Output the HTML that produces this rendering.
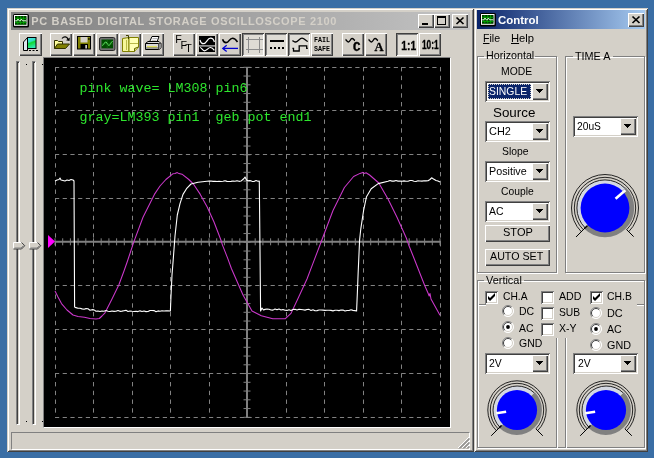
<!DOCTYPE html>
<html lang="en"><head><meta charset="utf-8"><title>PC BASED DIGITAL STORAGE OSCILLOSCOPE 2100</title>
<style>
html,body{margin:0;padding:0}
body{width:654px;height:458px;background:#3a6ea5;position:relative;overflow:hidden;font-family:"Liberation Sans",sans-serif;font-size:11px;color:#000}
.win{will-change:transform;position:absolute;background:#d4d0c8;box-shadow:inset 1px 1px 0 #d4d0c8,inset -1px -1px 0 #404040,inset 2px 2px 0 #fff,inset -2px -2px 0 #808080}
.a{position:absolute}
.t{position:absolute;white-space:nowrap;line-height:13px;font-size:11px}
.tb{position:absolute;width:22px;height:23px;background:#d4d0c8;box-sizing:border-box;box-shadow:inset 1px 1px 0 #fff,inset -1px -1px 0 #404040,inset -2px -2px 0 #808080}
.tb.dn{background:#dfdcd5;box-shadow:inset 1px 1px 0 #404040,inset -1px -1px 0 #fff,inset 2px 2px 0 #808080}
.tb svg{position:absolute;left:0;top:0}
.cap{position:absolute;width:16px;height:14px;background:#d4d0c8;box-shadow:inset 1px 1px 0 #fff,inset -1px -1px 0 #404040,inset -2px -2px 0 #808080}
.cap svg{position:absolute;left:0;top:0}
.sunk{position:absolute;box-sizing:border-box;border:1px solid;border-color:#808080 #fff #fff #808080}
.combo{position:absolute;height:21px;background:#fff;box-sizing:border-box;box-shadow:inset 1px 1px 0 #808080,inset -1px -1px 0 #fff,inset 2px 2px 0 #404040,inset -2px -2px 0 #d4d0c8}
.combo .dd{position:absolute;right:2px;top:2px;width:16px;height:17px;background:#d4d0c8;box-shadow:inset 1px 1px 0 #fff,inset -1px -1px 0 #404040,inset -2px -2px 0 #808080}
.combo .dd:after{content:"";position:absolute;left:4px;top:6px;width:7px;height:4px;background:linear-gradient(#000,#000) 0 0/7px 1px no-repeat,linear-gradient(#000,#000) 1px 1px/5px 1px no-repeat,linear-gradient(#000,#000) 2px 2px/3px 1px no-repeat,linear-gradient(#000,#000) 3px 3px/1px 1px no-repeat}
.btn{position:absolute;background:#d4d0c8;box-sizing:border-box;box-shadow:inset 1px 1px 0 #fff,inset -1px -1px 0 #404040,inset -2px -2px 0 #808080;text-align:center}
.grp{position:absolute;box-sizing:border-box;border:1px solid #808080;box-shadow:inset 1px 1px 0 #fff,1px 1px 0 #fff}
.cb{position:absolute;width:13px;height:13px;background:#fff;box-sizing:border-box;box-shadow:inset 1px 1px 0 #808080,inset -1px -1px 0 #fff,inset 2px 2px 0 #404040,inset -2px -2px 0 #d4d0c8}
.cb svg{position:absolute;left:0;top:0}
.rd{position:absolute;width:12px;height:12px}
</style></head>
<body>
<div class="win" id="mainwin" style="left:7px;top:8px;width:467px;height:444px">
<div class="a" id="mtitle" style="left:4px;top:4px;width:459px;height:18px;background:linear-gradient(to right,#808080,#c4c4c4)"></div>
<div class="a" style="left:6px;top:6px;width:16px;height:14px"><svg width="16" height="14" viewBox="0 0 16 14"><rect x="0" y="0" width="16" height="13.600" rx="1.600" fill="#000"/><rect x="1" y="1" width="13.500" height="10.800" fill="#fff"/><rect x="2" y="2" width="11.500" height="8.800" fill="#003a00"/><path d="M2 4.300H13.500M2 8.600H13.500M4.800 2V10.800M7.700 2V10.800M10.600 2V10.800" stroke="#00a800" stroke-width=".900" fill="none"/><path d="M2.200 6.800h1.800l1-1.800 1.200 1.800h1.200l1-1.800 1.200 1.800h3.600" stroke="#d8ffd8" stroke-width="1" fill="none"/></svg></div>
<span class="t" id="t_main" style="left:24.3px;top:7px;font-weight:bold;color:#d4d0c8;letter-spacing:0.66px">PC BASED DIGITAL STORAGE OSCILLOSCOPE 2100</span>
<div class="cap" style="left:411px;top:6px"><svg width="16" height="14" shape-rendering="crispEdges"><rect x="4" y="9" width="6" height="2" fill="#000"/></svg></div><div class="cap" style="left:427px;top:6px"><svg width="16" height="14" shape-rendering="crispEdges"><rect x="3.5" y="2.5" width="8" height="8" fill="none" stroke="#000"/><rect x="3" y="2" width="9" height="2" fill="#000"/></svg></div><div class="cap" style="left:445px;top:6px"><svg width="16" height="14"><path d="M4.5 3.5l7 6.5M11.5 3.5l-7 6.5" stroke="#000" stroke-width="1.7" fill="none"/></svg></div>
<div class="tb" style="left:12px;top:25px;width:23px"><svg width="22" height="22" viewBox="0 0 22 22"><defs><linearGradient id="gcard" x1="0" y1="0" x2="0.3" y2="1"><stop offset="0" stop-color="#50e8f0"/><stop offset="0.42" stop-color="#30e0c0"/><stop offset="0.56" stop-color="#10d830"/><stop offset="1" stop-color="#30e8b0"/></linearGradient></defs><path d="M8.500 4.500L4.500 9V17.500H8.500Z" fill="#dce8ee" stroke="#000"/><rect x="8.500" y="4.500" width="8.500" height="11" fill="url(#gcard)" stroke="#000"/><path d="M5 17.500H8.500M10 17.500H12M13.500 17.500H15.500M17 17.500H19" stroke="#000" stroke-width="1.200"/></svg></div>
<div class="tb" style="left:43px;top:25px"><svg width="22" height="22" viewBox="0 0 22 22"><path d="M4.500 15.500V7.500H7.500L8.500 8.500H12.500V11" fill="#ffff9c" stroke="#303000"/><path d="M4.500 15.500L7.500 11H19.500L15.500 15.500Z" fill="#808000" stroke="#303000"/><path d="M12 5.500c2-2.500 5-2 6 .8" fill="none" stroke="#000" stroke-width="1.200"/><path d="M16 7.200l3.500.8l.3-3.600Z" fill="#000"/></svg></div>
<div class="tb" style="left:66px;top:25px"><svg width="22" height="22" viewBox="0 0 22 22"><rect x="4.500" y="3.500" width="13" height="12.500" fill="#808000" stroke="#000"/><rect x="7.500" y="4" width="7" height="5.500" fill="#d4d0c8"/><rect x="7.500" y="11" width="7.500" height="5" fill="#000"/><rect x="12.300" y="12" width="1.700" height="3.500" fill="#d0d0d0"/><rect x="15.300" y="5" width="1.200" height="2" fill="#000"/></svg></div>
<div class="tb" style="left:89px;top:25px"><svg width="22" height="22" viewBox="0 0 22 22"><rect x="3.500" y="4.500" width="15.500" height="13" rx="1.600" fill="#707070" stroke="#282828"/><rect x="5.500" y="6.500" width="11.500" height="8.800" fill="#004c00"/><path d="M5.500 10.800H17M11.200 6.500V15.300" stroke="#1a701a" stroke-width=".700"/><path d="M6 12.500l1.500-.8 1.300-2.400 1.400-.3 1.400 2.300 1.500 1.400 1.400-2 1.200-1.900 1-.3" fill="none" stroke="#58d858" stroke-width="1"/></svg></div>
<div class="tb" style="left:112px;top:25px"><svg width="22" height="22" viewBox="0 0 22 22"><path d="M3.500 5.500L10 4.500V18.500H3.500Z" fill="#f6f69a" stroke="#808000"/><path d="M10 4.500H19.500V14L15.500 18.500H10Z" fill="#ffffb4" stroke="#808000"/><path d="M10.500 10.500H19M7.500 7V17" stroke="#b8b848" fill="none"/><path d="M7 2.500H9.500V6" fill="none" stroke="#404000"/><path d="M15.500 18.500L15.500 15.500L19.500 14" fill="#d8d868" stroke="#606000"/></svg></div>
<div class="tb" style="left:135px;top:25px"><svg width="22" height="22" viewBox="0 0 22 22"><path d="M7.500 9L10 3.500H17L15 9Z" fill="#fff" stroke="#000"/><path d="M10.500 5.500h5M9.800 7.300h4.700" stroke="#a0a0a0" stroke-width=".800"/><path d="M3.500 10.500L6 8.500H17L19 10.500V14.500L17.500 16.500H3.500Z" fill="#d8d8d8" stroke="#000"/><path d="M3.500 10.500H16.500L19 10.500M16.500 10.500V16.500" stroke="#000" fill="none"/><path d="M16.500 10.500H19V14.500L17.500 16.500H16.500Z" fill="#909090"/><rect x="5" y="13" width="10" height="1.600" fill="#e0e060"/><path d="M3.500 15H16.500" stroke="#404040" stroke-width=".800"/></svg></div>
<div class="tb" style="left:166px;top:25px"><svg width="22" height="22" viewBox="0 0 22 22"><g font-family="Liberation Sans,sans-serif" font-size="10.700" fill="#000"><text x="2.200" y="10.300">F</text><text x="7.500" y="15.600">F</text><text x="12.300" y="18.700">T</text></g></svg></div>
<div class="tb" style="left:189px;top:25px"><svg width="22" height="22" viewBox="0 0 22 22"><rect x="3" y="3" width="16" height="16" fill="#000"/><path d="M3 12.900h16" stroke="#a0a0a0" stroke-width="1.600"/><path d="M4 7c.5 2 1.500 3.700 3.400 3.700 3.600 0 3.600-5.500 7.100-5.500 1.900 0 3.300 1.500 3.900 3.800" fill="none" stroke="#fff" stroke-width="1.200"/><path d="M4 14.500c1.500 0 2.500 3.300 4.500 3.300 2.700 0 3.300-3.300 6-3.300 1.800 0 2.800 1.300 3.900 2.800" fill="none" stroke="#fff" stroke-width="1.200"/></svg></div>
<div class="tb" style="left:212px;top:25px"><svg width="22" height="22" viewBox="0 0 22 22"><path d="M3.600 6.300c.6 2 1.800 3.300 3.400 3.300 3.300 0 3.200-4.400 6.500-4.400 2 0 3.500 1.500 5 3.800" fill="none" stroke="#000" stroke-width="1.600"/><path d="M3.800 15.400H19" stroke="#0000d0" stroke-width="1.300"/><path d="M7.700 12.200L3.800 15.400L7.700 18.600" fill="none" stroke="#0000d0" stroke-width="1.300"/></svg></div>
<div class="tb dn" style="left:235px;top:25px"><svg width="22" height="22" viewBox="0 0 22 22" shape-rendering="crispEdges"><path d="M6.500 3.500v16M17.500 3.500v16M4 6.500h17M4 16.500h17" stroke="#8c8c8c" stroke-width="1"/></svg></div>
<div class="tb dn" style="left:258px;top:25px"><svg width="22" height="22" viewBox="0 0 22 22" shape-rendering="crispEdges"><rect x="5" y="7" width="14" height="2" fill="#000"/><g fill="#000"><rect x="5" y="14" width="2" height="2"/><rect x="9" y="14" width="2" height="2"/><rect x="13" y="14" width="2" height="2"/><rect x="17" y="14" width="2" height="2"/></g></svg></div>
<div class="tb dn" style="left:281px;top:25px"><svg width="22" height="22" viewBox="0 0 22 22"><path d="M4.400 7.600c1 .3 1.800 1.500 3.200 1.400 2.200-.2 4-3.800 6.400-3.800 2.300 0 3.600 2.300 5.800 3.300" fill="none" stroke="#000" stroke-width="1.300"/><path d="M4.400 15.400H5.500V18H11.200V12.900H18.700V15.400H19.800" fill="none" stroke="#000" stroke-width="1.300"/></svg></div>
<div class="tb" style="left:304px;top:25px"><svg width="22" height="22" viewBox="0 0 22 22"><g font-family="Liberation Mono,monospace" font-weight="bold" font-size="7" fill="#000"><text x="3" y="8.900" textLength="16" lengthAdjust="spacingAndGlyphs">FAIL</text><text x="3" y="17.900" textLength="16" lengthAdjust="spacingAndGlyphs">SAFE</text></g></svg></div>
<div class="tb" style="left:335px;top:25px"><svg width="22" height="22" viewBox="0 0 22 22"><path d="M3.500 6.500c1 .3 1.500 2.500 3 2.500s2-3.500 3.500-3.500 2 1.500 3 2" fill="none" stroke="#000" stroke-width="1.400"/><text x="11" y="18.100" font-family="Liberation Mono,monospace" font-weight="bold" font-size="12.500" fill="#000" stroke="#000" stroke-width=".400">C</text></svg></div>
<div class="tb" style="left:358px;top:25px"><svg width="22" height="22" viewBox="0 0 22 22"><path d="M3.500 6.500c1 .3 1.500 2.500 3 2.500s2-3.500 3.500-3.500 2 1.500 3 2" fill="none" stroke="#000" stroke-width="1.400"/><text x="9.600" y="18.100" font-family="Liberation Serif,serif" font-weight="bold" font-size="12.500" fill="#000" stroke="#000" stroke-width=".300">A</text></svg></div>
<div class="tb dn" style="left:389px;top:25px"><svg width="22" height="22" viewBox="0 0 22 22"><text x="5.300" y="16.500" font-family="Liberation Sans,sans-serif" font-weight="bold" font-size="12" fill="#000" stroke="#000" stroke-width=".300" textLength="14.800" lengthAdjust="spacingAndGlyphs">1:1</text></svg></div>
<div class="tb" style="left:412px;top:25px"><svg width="22" height="22" viewBox="0 0 22 22"><text x="3" y="15.800" font-family="Liberation Sans,sans-serif" font-weight="bold" font-size="12" fill="#000" stroke="#000" stroke-width=".350" textLength="16.600" lengthAdjust="spacingAndGlyphs">10:1</text></svg></div>
<div class="a" style="left:9px;top:53px;width:4px;height:364px;box-sizing:border-box;border:1px solid;border-color:#808080 #fff #fff #808080;background:#d4d0c8;box-shadow:inset 1px 1px 0 #404040"></div><div class="a" style="left:25px;top:53px;width:4px;height:364px;box-sizing:border-box;border:1px solid;border-color:#808080 #fff #fff #808080;background:#d4d0c8;box-shadow:inset 1px 1px 0 #404040"></div><div class="a" style="left:6px;top:232px;width:13px;height:8px"><svg width="13" height="8" viewBox="0 0 13 8"><path d="M0.500 0.500H8.500L11.800 3.700L8.500 7H0.500Z" fill="#d4d0c8"/><path d="M0.500 6.500V0.500H8.500" stroke="#fff" fill="none"/><path d="M0.500 7H8.500L11.800 3.700L8.500 0.500" stroke="#404040" fill="none"/><path d="M1.500 6H8L10.500 3.700" stroke="#808080" fill="none"/></svg></div><div class="a" style="left:22px;top:232px;width:13px;height:8px"><svg width="13" height="8" viewBox="0 0 13 8"><path d="M0.500 0.500H8.500L11.800 3.700L8.500 7H0.500Z" fill="#d4d0c8"/><path d="M0.500 6.500V0.500H8.500" stroke="#fff" fill="none"/><path d="M0.500 7H8.500L11.800 3.700L8.500 0.500" stroke="#404040" fill="none"/><path d="M1.500 6H8L10.500 3.700" stroke="#808080" fill="none"/></svg></div><div class="a" style="left:19px;top:56px;width:1px;height:1px;background:#000"></div><div class="a" style="left:35px;top:56px;width:1px;height:1px;background:#000"></div><div class="a" style="left:19px;top:413px;width:1px;height:1px;background:#000"></div><div class="a" style="left:35px;top:413px;width:1px;height:1px;background:#000"></div>
<div class="sunk" id="scope" style="left:36px;top:49px;width:408px;height:371px;background:#000">
<svg class="a" style="left:0;top:0" width="406" height="369" viewBox="0 0 406 369">
<path d="M11.5 9V360" stroke="#828282" stroke-width="1" stroke-dasharray="4.4 4.35" fill="none"/>
<path d="M49.5 9V360" stroke="#828282" stroke-width="1" stroke-dasharray="4.4 4.35" fill="none"/>
<path d="M88.5 9V360" stroke="#828282" stroke-width="1" stroke-dasharray="4.4 4.35" fill="none"/>
<path d="M126.5 9V360" stroke="#828282" stroke-width="1" stroke-dasharray="4.4 4.35" fill="none"/>
<path d="M165.5 9V360" stroke="#828282" stroke-width="1" stroke-dasharray="4.4 4.35" fill="none"/>
<path d="M242.5 9V360" stroke="#828282" stroke-width="1" stroke-dasharray="4.4 4.35" fill="none"/>
<path d="M280.5 9V360" stroke="#828282" stroke-width="1" stroke-dasharray="4.4 4.35" fill="none"/>
<path d="M319.5 9V360" stroke="#828282" stroke-width="1" stroke-dasharray="4.4 4.35" fill="none"/>
<path d="M357.5 9V360" stroke="#828282" stroke-width="1" stroke-dasharray="4.4 4.35" fill="none"/>
<path d="M396.5 9V360" stroke="#828282" stroke-width="1" stroke-dasharray="4.4 4.35" fill="none"/>
<path d="M11 9.5H397" stroke="#828282" stroke-width="1" stroke-dasharray="4.2 3.5" fill="none"/>
<path d="M11 52.5H397" stroke="#828282" stroke-width="1" stroke-dasharray="4.2 3.5" fill="none"/>
<path d="M11 96.5H397" stroke="#828282" stroke-width="1" stroke-dasharray="4.2 3.5" fill="none"/>
<path d="M11 140.5H397" stroke="#828282" stroke-width="1" stroke-dasharray="4.2 3.5" fill="none"/>
<path d="M11 227.5H397" stroke="#828282" stroke-width="1" stroke-dasharray="4.2 3.5" fill="none"/>
<path d="M11 271.5H397" stroke="#828282" stroke-width="1" stroke-dasharray="4.2 3.5" fill="none"/>
<path d="M11 315.5H397" stroke="#828282" stroke-width="1" stroke-dasharray="4.2 3.5" fill="none"/>
<path d="M11 359.5H397" stroke="#828282" stroke-width="1" stroke-dasharray="4.2 3.5" fill="none"/>
<path d="M11 183.8H397" stroke="#808080" stroke-width="2" fill="none"/>
<path d="M203 9V360" stroke="#808080" stroke-width="2" fill="none"/>
<path d="M11 180.3V187.3M18.7 180.3V187.3M26.4 180.3V187.3M34.1 180.3V187.3M41.8 180.3V187.3M49.5 180.3V187.3M57.2 180.3V187.3M64.9 180.3V187.3M72.6 180.3V187.3M80.3 180.3V187.3M88 180.3V187.3M95.7 180.3V187.3M103.4 180.3V187.3M111.1 180.3V187.3M118.8 180.3V187.3M126.5 180.3V187.3M134.2 180.3V187.3M141.9 180.3V187.3M149.6 180.3V187.3M157.3 180.3V187.3M165 180.3V187.3M172.7 180.3V187.3M180.4 180.3V187.3M188.1 180.3V187.3M195.8 180.3V187.3M203.5 180.3V187.3M211.2 180.3V187.3M218.9 180.3V187.3M226.6 180.3V187.3M234.3 180.3V187.3M242 180.3V187.3M249.7 180.3V187.3M257.4 180.3V187.3M265.1 180.3V187.3M272.8 180.3V187.3M280.5 180.3V187.3M288.2 180.3V187.3M295.9 180.3V187.3M303.6 180.3V187.3M311.3 180.3V187.3M319 180.3V187.3M326.7 180.3V187.3M334.4 180.3V187.3M342.1 180.3V187.3M349.8 180.3V187.3M357.5 180.3V187.3M365.2 180.3V187.3M372.9 180.3V187.3M380.6 180.3V187.3M388.3 180.3V187.3M396 180.3V187.3M199.5 9.3H206.5M199.5 18.05H206.5M199.5 26.8H206.5M199.5 35.55H206.5M199.5 44.3H206.5M199.5 53.05H206.5M199.5 61.8H206.5M199.5 70.55H206.5M199.5 79.3H206.5M199.5 88.05H206.5M199.5 96.8H206.5M199.5 105.55H206.5M199.5 114.3H206.5M199.5 123.05H206.5M199.5 131.8H206.5M199.5 140.55H206.5M199.5 149.3H206.5M199.5 158.05H206.5M199.5 166.8H206.5M199.5 175.55H206.5M199.5 184.3H206.5M199.5 193.05H206.5M199.5 201.8H206.5M199.5 210.55H206.5M199.5 219.3H206.5M199.5 228.05H206.5M199.5 236.8H206.5M199.5 245.55H206.5M199.5 254.3H206.5M199.5 263.05H206.5M199.5 271.8H206.5M199.5 280.55H206.5M199.5 289.3H206.5M199.5 298.05H206.5M199.5 306.8H206.5M199.5 315.55H206.5M199.5 324.3H206.5M199.5 333.05H206.5M199.5 341.8H206.5M199.5 350.55H206.5M199.5 359.3H206.5" stroke="#808080" stroke-width="1" fill="none"/>
<path d="M4 177L11 183.5L4 190Z" fill="#ff00ff"/>
<path d="M11 233L14 239L17.5 245.6L23 252L29 257L34 258.5L40.4 259.3L46 260.5L52 261L55.3 260.5L58 258L61 254.8L68 241L74.8 227L80 213L83.5 203L90 183.4L99 159.3L110.4 136.4L116 128L121.9 121.5L128.8 115.8L131 115.5L133.3 114.6L135 115.6L138 116.2L144.8 121.5L149.4 126L156.3 136.4L163.2 149L170 164L177 182.3L178.3 186.6L183.8 200.6L187.5 210.7L199 237L208 253L217.3 257.7L228.8 260.7L241.4 260.7L247 255.4L254 240.5L263 221L270 202.6L277 184.3L289 152.5L300.4 129.5L309.6 118.5L316 115.4L318.8 114.4L320.5 115.4L322 114.8L325.6 117L334.8 125L344 141L353 159.3L362.3 180L364.4 186.2L369.2 198.3L380.8 227.7L384 235L385.2 238L386 235.5L387 241L396 257.2" stroke="#cc38cc" stroke-width="1.05" fill="none" stroke-linejoin="round"/>
<path d="M11 123L13 122L15 121.5L16 120L17 122L19 122.5L21 123L23 122L25 122.5L27 121.5L29 122L30 123L30.6 249L32 249.63L34 250.31L36 250.32L38 250.9L40 251.18L42 250.64L44 250.82L46 252.22L48 251.66L50 251.88L52 253.19L54 252.96L56 253.47L58 252.97L60 253.19L62 252.51L64 253.19L66 253.52L68 253.03L70 253.34L72 253.24L74 252.39L76 253.36L78 253.13L80 252.72L82 252.34L84 253.51L86 252.96L88 253.31L90 253.53L92 253.3L94 253.59L96 252.85L98 253.42L100 252.92L102 253.61L104 253.53L106 252.44L108 252.49L110 252.6L112 253.65L114 252.91L116 253.18L118 252.72L120 253.01L122 252.84L124 252.79L126.4 253L127 238L128 217L129.2 202L131 178L133.3 157L136 145.6L139 136.4L142.5 130.7L147 126L154 124.2L163 123.3L165 123.09L167 123.08L169 123.4L171 123.18L173 123.43L175 123.36L177 123.49L179 123.17L181 122.66L183 123.36L185 123.46L187 123.4L189 123.07L191 123.21L193 122.71L195 123.33L197 123.07L200 120.5L201 119L202.5 122L204 122.78L206 122.56L208 123.35L210 123.49L212 122.59L214 123.3L215.3 123L216 192L216.6 253L218 250L219.5 252L221 251.37L223 251.03L225 251.26L227 251.94L229 252.11L231 250.97L233 251.79L235 251.02L237 251.98L239 251.46L241 252.26L243 252.42L245 251.77L247 252.49L249 251.54L251 251.24L253 252L255 251.22L257 251.48L259 251.79L261 252.1L263 251.49L265 251.35L267 252.53L269 251.77L271 252.7L273 252.63L275 251.93L277 252.07L279 252.17L281 252.37L283 252.32L285 252.29L287 252.4L289 252.87L291 252.29L293 252.2L295 252.63L297 251.98L299 252.09L301 253.06L303 252.44L305 252.5L307 251.77L309 252.36L311 252.61L312.6 253L313.4 234L314.1 216L315.6 182L316.8 170.8L319.6 152.5L322.5 138.7L327.2 130.7L334.2 125.6L344 123.3L346 122.52L348 123.12L350 123.13L352 122.56L354 123.13L356 122.97L358 123.18L360 122.85L362 123.21L364 123.24L366 122.52L368 122.56L370 123.18L372 123.46L374 122.75L376 122.96L378 123.09L380 122.82L382 122.86L384 122.81L386 121.5L387.6 119.8L389.5 121L392 122.5L394 123L396 124" stroke="#ffffff" stroke-width="1.1" fill="none" stroke-linejoin="round"/>
</svg>
<span class="t" id="t_g1" style="left:35.5px;top:23px;font-family:'Liberation Mono',monospace;font-size:13.33px;line-height:15px;color:#2ee62e;white-space:pre">pink wave= LM308 pin6</span>
<span class="t" id="t_g2" style="left:35.5px;top:52px;font-family:'Liberation Mono',monospace;font-size:13.33px;line-height:15px;color:#2ee62e;white-space:pre">gray=LM393 pin1  geb pot end1</span>
</div>
<div class="sunk" style="left:4px;top:424px;width:459px;height:18px"></div><div class="a" style="left:450px;top:428px;width:13px;height:13px"><svg width="13" height="13" viewBox="0 0 13 13"><path d="M12 1L1 12M12 5L5 12M12 9L9 12" stroke="#fff" stroke-width="1"/><path d="M12.500 2L2 12.500M12.500 3L3 12.500M12.500 6L6 12.500M12.500 7L7 12.500M12.500 10L10 12.500M12.500 11L11 12.500" stroke="#808080" stroke-width="1"/></svg></div>
</div>
<div class="win" id="ctrlwin" style="left:474px;top:8px;width:174px;height:444px">
<div class="a" id="ctitle" style="left:3px;top:2px;width:168px;height:19px;background:linear-gradient(to right,#0a246a,#a6caf0)"></div>
<div class="a" style="left:6px;top:5px;width:16px;height:14px"><svg width="16" height="14" viewBox="0 0 16 14"><rect x="0" y="0" width="16" height="13.600" rx="1.600" fill="#000"/><rect x="1" y="1" width="13.500" height="10.800" fill="#fff"/><rect x="2" y="2" width="11.500" height="8.800" fill="#003a00"/><path d="M2 4.300H13.500M2 8.600H13.500M4.800 2V10.800M7.700 2V10.800M10.600 2V10.800" stroke="#00a800" stroke-width=".900" fill="none"/><path d="M2.200 6.800h1.800l1-1.800 1.200 1.800h1.200l1-1.800 1.200 1.800h3.600" stroke="#d8ffd8" stroke-width="1" fill="none"/></svg></div>
<span class="t" id="t_ctrl" style="left:23.54px;top:5.9px;font-size:11px;transform:scaleX(1.0397);transform-origin:0 0;font-weight:bold;color:#fff">Control</span>
<div class="cap" style="left:154px;top:5px"><svg width="16" height="14"><path d="M4.500 3.500l7 6.500M11.500 3.500l-7 6.500" stroke="#000" stroke-width="1.700" fill="none"/></svg></div>
<span class="t" id="t_file" style="left:8.55px;top:24.1px;font-size:11px;transform:scaleX(0.9640);transform-origin:0 0;"><u>F</u>ile</span><span class="t" id="t_help" style="left:36.5px;top:24.1px;font-size:11px;transform:scaleX(1.0195);transform-origin:0 0;"><u>H</u>elp</span>
<div class="grp" id="g_h" style="left:3px;top:48px;width:80px;height:217px"></div><span class="a" style="left:10px;top:45px;width:51px;height:4px;background:#d4d0c8"></span><span class="t" id="t_hor" style="left:11.84px;top:41.1px;font-size:11px;transform:scaleX(0.9737);transform-origin:0 0;">Horizontal</span><span class="t" id="t_mode" style="left:27.07px;top:57.3px;font-size:11px;transform:scaleX(0.9438);transform-origin:0 0;">MODE</span><div class="combo" style="left:11px;top:73px;width:65px"><span class="a" style="left:3px;top:3px;width:43px;height:15px;background:#0a246a;box-sizing:border-box;border:1px dotted #d4d0c8"></span><span class="t" id="t_single" style="left:4.33px;top:4px;font-size:11px;transform:scaleX(0.9446);transform-origin:0 0;color:#fff">SINGLE</span><span class="dd"></span></div>
<span class="t" id="t_source" style="left:19.4px;top:97.9px;font-size:13px;transform:scaleX(1.0290);transform-origin:0 0;">Source</span><div class="combo" style="left:11px;top:113px;width:65px"><span class="t" id="t_ch2" style="left:4.15px;top:4px;font-size:11px;transform:scaleX(0.9926);transform-origin:0 0;">CH2</span><span class="dd"></span></div>
<span class="t" id="t_slope" style="left:27.53px;top:137.1px;font-size:11px;transform:scaleX(0.9422);transform-origin:0 0;">Slope</span><div class="combo" style="left:11px;top:153px;width:65px"><span class="t" id="t_pos" style="left:3.84px;top:4px;font-size:11px;transform:scaleX(0.9763);transform-origin:0 0;">Positive</span><span class="dd"></span></div>
<span class="t" id="t_couple" style="left:27.48px;top:177.1px;font-size:11px;transform:scaleX(0.9386);transform-origin:0 0;">Couple</span><div class="combo" style="left:11px;top:193px;width:65px"><span class="t" id="t_ac" style="left:4.2px;top:4px;font-size:11px;transform:scaleX(0.9495);transform-origin:0 0;">AC</span><span class="dd"></span></div>
<div class="btn" style="left:11px;top:217px;width:65px;height:17px"><span class="t" id="t_stop" style="left:18.2px;top:1.4px;font-size:11px;transform:scaleX(1.0031);transform-origin:0 0;">STOP</span></div>
<div class="btn" style="left:11px;top:241px;width:65px;height:17px"><span class="t" id="t_auto" style="left:4.8px;top:1.4px;font-size:11px;transform:scaleX(0.9714);transform-origin:0 0;">AUTO SET</span></div>
<div class="grp" id="g_t" style="left:91px;top:48px;width:80px;height:217px"></div><span class="a" style="left:99px;top:45px;width:40px;height:4px;background:#d4d0c8"></span><span class="t" id="t_timea" style="left:100.88px;top:41.6px;font-size:11px;transform:scaleX(0.9831);transform-origin:0 0;">TIME A</span><div class="combo" style="left:99px;top:108px;width:65px"><span class="t" id="t_20us" style="left:4.49px;top:4px;font-size:11px;transform:scaleX(0.9314);transform-origin:0 0;">20uS</span><span class="dd"></span></div>
<svg class="a" style="left:88.4px;top:157px" width="86" height="86" viewBox="-43 -43 86 86"><path d="M-23.69 23.69A33.5 33.5 0 1 1 23.69 23.69" fill="none" stroke="#101010" stroke-width=".900"/><path d="M-21.71 21.71A30.7 30.7 0 1 1 21.71 21.71" fill="none" stroke="#101010" stroke-width=".900"/><path d="M18.6 -18.6A26.3 26.3 0 0 1 -18.6 18.6" fill="none" stroke="#808080" stroke-width="5.8"/><path d="M-18.21 18.21A25.75 25.75 0 0 1 18.21 -18.21" fill="none" stroke="#d4d8e2" stroke-width="4.7"/><path d="M-19.87 19.87A28.1 28.1 0 0 1 19.87 -19.87" fill="none" stroke="#101010" stroke-width=".900"/><path d="M-17.68 17.68L-28.99 28.99" stroke="#000" stroke-width="1"/><path d="M-17.68 17.68L-20.58 20.58" stroke="#000" stroke-width="1.500"/><path d="M21.64 21.64L28.64 28.64" stroke="#000" stroke-width="1"/><circle cx="0" cy="0" r="24.4" fill="#0000ff"/><path d="M10.57 -9.18L20.38 -17.71" stroke="#fff" stroke-width="2.600"/></svg>
<div class="grp" id="g_v" style="left:3px;top:272px;width:168px;height:168px"></div><span class="a" style="left:10px;top:269px;width:40px;height:4px;background:#d4d0c8"></span><span class="t" id="t_vert" style="left:12.4px;top:265.5px;font-size:11px;transform:scaleX(0.9925);transform-origin:0 0;">Vertical</span><div class="a" style="left:5px;top:296px;width:7px;height:1px;background:#808080;box-shadow:0 1px 0 #fff"></div><div class="a" style="left:163px;top:296px;width:7px;height:1px;background:#808080;box-shadow:0 1px 0 #fff"></div><div class="a" style="left:82px;top:330px;width:1px;height:110px;background:#808080;box-shadow:1px 0 0 #fff"></div><div class="a" style="left:91px;top:330px;width:1px;height:110px;background:#808080;box-shadow:1px 0 0 #fff"></div>
<div class="cb" style="left:11px;top:283px"><svg width="13" height="13" viewBox="0 0 13 13"><path d="M3 5v3l2 2 5-5v-3l-5 5z" fill="#000"/></svg></div><span class="t" id="t_cha" style="left:29.09px;top:282.1px;font-size:11px;transform:scaleX(0.9344);transform-origin:0 0;">CH.A</span><div class="rd" style="left:27.7px;top:297px"><svg width="12" height="12" viewBox="0 0 12 12"><circle cx="6" cy="6" r="5.500" fill="#fff"/><path d="M2.100 9.900A5.500 5.500 0 0 1 9.900 2.100" stroke="#808080" fill="none"/><path d="M2.800 9.200A4.500 4.500 0 0 1 9.200 2.800" stroke="#404040" fill="none"/><path d="M9.900 2.100A5.500 5.500 0 0 1 2.100 9.900" stroke="#fff" fill="none"/><path d="M9.200 2.800A4.500 4.500 0 0 1 2.800 9.200" stroke="#d4d0c8" fill="none"/></svg></div><span class="t" id="t_dca" style="left:45.06px;top:297.1px;font-size:11px;transform:scaleX(0.9537);transform-origin:0 0;">DC</span><div class="rd" style="left:27.7px;top:313px"><svg width="12" height="12" viewBox="0 0 12 12"><circle cx="6" cy="6" r="5.500" fill="#fff"/><path d="M2.100 9.900A5.500 5.500 0 0 1 9.900 2.100" stroke="#808080" fill="none"/><path d="M2.800 9.200A4.500 4.500 0 0 1 9.200 2.800" stroke="#404040" fill="none"/><path d="M9.900 2.100A5.500 5.500 0 0 1 2.100 9.900" stroke="#fff" fill="none"/><path d="M9.200 2.800A4.500 4.500 0 0 1 2.800 9.200" stroke="#d4d0c8" fill="none"/><circle cx="6" cy="6" r="1.900" fill="#000"/></svg></div><span class="t" id="t_aca" style="left:45.1px;top:313.5px;font-size:11px;transform:scaleX(0.9428);transform-origin:0 0;">AC</span><div class="rd" style="left:27.7px;top:329px"><svg width="12" height="12" viewBox="0 0 12 12"><circle cx="6" cy="6" r="5.500" fill="#fff"/><path d="M2.100 9.900A5.500 5.500 0 0 1 9.900 2.100" stroke="#808080" fill="none"/><path d="M2.800 9.200A4.500 4.500 0 0 1 9.200 2.800" stroke="#404040" fill="none"/><path d="M9.900 2.100A5.500 5.500 0 0 1 2.100 9.900" stroke="#fff" fill="none"/><path d="M9.200 2.800A4.500 4.500 0 0 1 2.800 9.200" stroke="#d4d0c8" fill="none"/></svg></div><span class="t" id="t_gnda" style="left:45.28px;top:329.3px;font-size:11px;transform:scaleX(0.9497);transform-origin:0 0;">GND</span><div class="cb" style="left:67px;top:283px"></div><span class="t" id="t_add" style="left:85.3px;top:282.3px;font-size:11px;transform:scaleX(0.9685);transform-origin:0 0;">ADD</span><div class="cb" style="left:67px;top:299px"></div><span class="t" id="t_sub" style="left:85.24px;top:298.1px;font-size:11px;transform:scaleX(0.9369);transform-origin:0 0;">SUB</span><div class="cb" style="left:67px;top:315px"></div><span class="t" id="t_xy" style="left:84.59px;top:314.3px;font-size:11px;transform:scaleX(0.9510);transform-origin:0 0;">X-Y</span><div class="cb" style="left:116px;top:283px"><svg width="13" height="13" viewBox="0 0 13 13"><path d="M3 5v3l2 2 5-5v-3l-5 5z" fill="#000"/></svg></div><span class="t" id="t_chb" style="left:132.88px;top:282.3px;font-size:11px;transform:scaleX(0.9469);transform-origin:0 0;">CH.B</span><div class="rd" style="left:116px;top:298.7px"><svg width="12" height="12" viewBox="0 0 12 12"><circle cx="6" cy="6" r="5.500" fill="#fff"/><path d="M2.100 9.900A5.500 5.500 0 0 1 9.900 2.100" stroke="#808080" fill="none"/><path d="M2.800 9.200A4.500 4.500 0 0 1 9.200 2.800" stroke="#404040" fill="none"/><path d="M9.900 2.100A5.500 5.500 0 0 1 2.100 9.900" stroke="#fff" fill="none"/><path d="M9.200 2.800A4.500 4.500 0 0 1 2.800 9.200" stroke="#d4d0c8" fill="none"/></svg></div><span class="t" id="t_dcb" style="left:132.73px;top:298.7px;font-size:11px;transform:scaleX(0.9880);transform-origin:0 0;">DC</span><div class="rd" style="left:116px;top:314.8px"><svg width="12" height="12" viewBox="0 0 12 12"><circle cx="6" cy="6" r="5.500" fill="#fff"/><path d="M2.100 9.900A5.500 5.500 0 0 1 9.900 2.100" stroke="#808080" fill="none"/><path d="M2.800 9.200A4.500 4.500 0 0 1 9.200 2.800" stroke="#404040" fill="none"/><path d="M9.900 2.100A5.500 5.500 0 0 1 2.100 9.900" stroke="#fff" fill="none"/><path d="M9.200 2.800A4.500 4.500 0 0 1 2.800 9.200" stroke="#d4d0c8" fill="none"/><circle cx="6" cy="6" r="1.900" fill="#000"/></svg></div><span class="t" id="t_acb" style="left:133px;top:314.9px;font-size:11px;transform:scaleX(0.9630);transform-origin:0 0;">AC</span><div class="rd" style="left:116px;top:330.5px"><svg width="12" height="12" viewBox="0 0 12 12"><circle cx="6" cy="6" r="5.500" fill="#fff"/><path d="M2.100 9.900A5.500 5.500 0 0 1 9.900 2.100" stroke="#808080" fill="none"/><path d="M2.800 9.200A4.500 4.500 0 0 1 9.200 2.800" stroke="#404040" fill="none"/><path d="M9.900 2.100A5.500 5.500 0 0 1 2.100 9.900" stroke="#fff" fill="none"/><path d="M9.200 2.800A4.500 4.500 0 0 1 2.800 9.200" stroke="#d4d0c8" fill="none"/></svg></div><span class="t" id="t_gndb" style="left:132.86px;top:330.9px;font-size:11px;transform:scaleX(0.9797);transform-origin:0 0;">GND</span><div class="combo" style="left:11px;top:345px;width:65px"><span class="t" id="t_2va" style="left:4.48px;top:4px;font-size:11px;transform:scaleX(0.9479);transform-origin:0 0;">2V</span><span class="dd"></span></div>
<div class="combo" style="left:99px;top:345px;width:65px"><span class="t" id="t_2vb" style="left:4.78px;top:4px;font-size:11px;transform:scaleX(0.9479);transform-origin:0 0;">2V</span><span class="dd"></span></div>
<svg class="a" style="left:5.1px;top:363.8px" width="76" height="76" viewBox="-38 -38 76 76"><path d="M-20.65 20.65A29.2 29.2 0 1 1 20.65 20.65" fill="none" stroke="#101010" stroke-width=".900"/><path d="M-18.88 18.88A26.7 26.7 0 1 1 18.88 18.88" fill="none" stroke="#101010" stroke-width=".900"/><path d="M15.66 -15.66A22.15 22.15 0 0 1 -15.66 15.66" fill="none" stroke="#808080" stroke-width="6.1"/><path d="M-15.34 15.34A21.7 21.7 0 0 1 15.34 -15.34" fill="none" stroke="#d4d8e2" stroke-width="5.2"/><path d="M-17.18 17.18A24.3 24.3 0 0 1 17.18 -17.18" fill="none" stroke="#101010" stroke-width=".900"/><path d="M-15.56 15.56L-25.81 25.81" stroke="#000" stroke-width="1"/><path d="M-15.56 15.56L-17.89 17.89" stroke="#000" stroke-width="1.500"/><path d="M19.09 19.09L25.81 25.81" stroke="#000" stroke-width="1"/><circle cx="0" cy="0" r="20.1" fill="#0000ff"/><path d="M-10.86 1.72L-20.74 3.29" stroke="#fff" stroke-width="2.600"/></svg>
<svg class="a" style="left:93.6px;top:363.8px" width="76" height="76" viewBox="-38 -38 76 76"><path d="M-20.65 20.65A29.2 29.2 0 1 1 20.65 20.65" fill="none" stroke="#101010" stroke-width=".900"/><path d="M-18.88 18.88A26.7 26.7 0 1 1 18.88 18.88" fill="none" stroke="#101010" stroke-width=".900"/><path d="M15.66 -15.66A22.15 22.15 0 0 1 -15.66 15.66" fill="none" stroke="#808080" stroke-width="6.1"/><path d="M-15.34 15.34A21.7 21.7 0 0 1 15.34 -15.34" fill="none" stroke="#d4d8e2" stroke-width="5.2"/><path d="M-17.18 17.18A24.3 24.3 0 0 1 17.18 -17.18" fill="none" stroke="#101010" stroke-width=".900"/><path d="M-15.56 15.56L-25.81 25.81" stroke="#000" stroke-width="1"/><path d="M-15.56 15.56L-17.89 17.89" stroke="#000" stroke-width="1.500"/><path d="M19.09 19.09L25.81 25.81" stroke="#000" stroke-width="1"/><circle cx="0" cy="0" r="20.1" fill="#0000ff"/><path d="M-10.86 1.72L-20.74 3.29" stroke="#fff" stroke-width="2.600"/></svg>
</div>
</body></html>
